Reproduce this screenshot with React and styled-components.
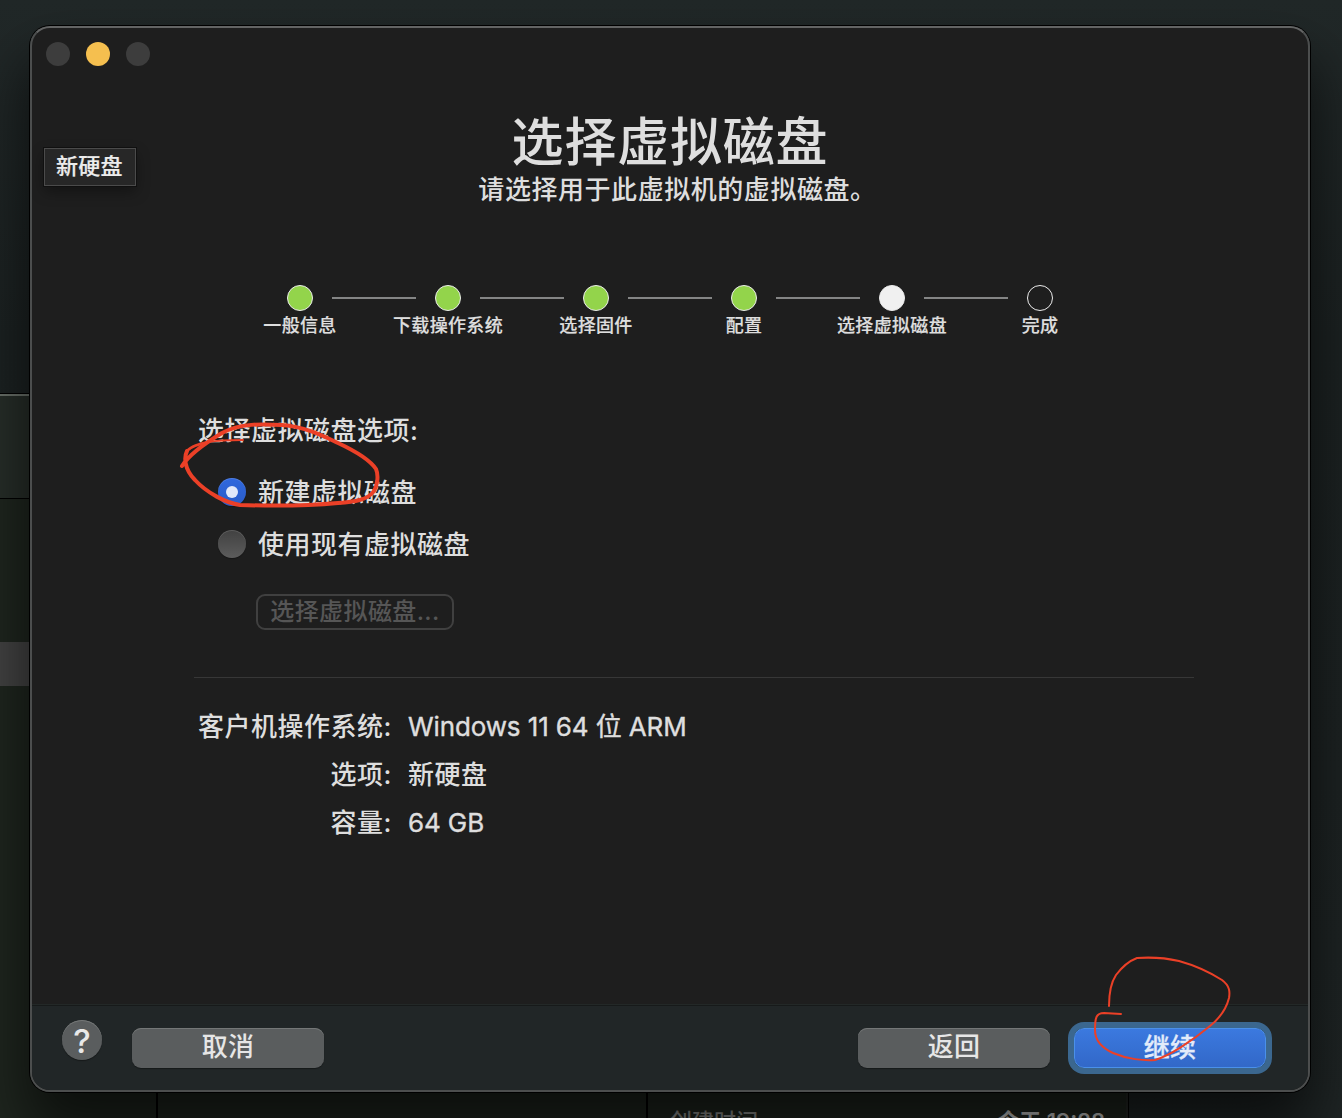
import React from "react";
import styled, { createGlobalStyle, css } from "styled-components";

const GlobalStyle = createGlobalStyle`
  * { box-sizing: border-box; }
  body {
    margin: 0;
    background: #1f2626;
    font-family: Inter, "Noto Sans CJK SC", sans-serif;
    color: #dedede;
    overflow: hidden;
  }
`;

const Desktop = styled.div`
  position: relative;
  width: 1342px;
  height: 1118px;
  overflow: hidden;
  background: linear-gradient(#212828, #1c2222 30%, #1d2323 70%, #1f2525);
`;

const BackWindow = styled.div`
  position: absolute;
  left: 0;
  top: 393px;
  width: 1129px;
  height: 725px;
  display: flex;
  flex-direction: column;
  border-top: 1px solid #000;
  border-right: 1px solid #000;
  background: #1f261f;
`;

const BackToolbar = styled.div`
  height: 105px;
  flex: none;
  background: #272e29;
  border-top: 2px solid #6a716a;
  border-bottom: 1px solid #000;
`;

const BackBody = styled.div`
  flex: 1;
  display: flex;
`;

const BackSidebar = styled.div`
  width: 158px;
  padding-top: 143px;
  border-right: 2px solid #000;
`;

const BackSelection = styled.div`
  height: 44px;
  background: #434343;
`;

const BackList = styled.div`
  width: 490px;
  border-right: 2px solid #000;
`;

const BackDetail = styled.div`
  flex: 1;
  display: flex;
  align-items: flex-end;
  justify-content: space-between;
  padding: 0 21px 0 22px;
  border-right: 2px solid #262926;
`;

const BackText = styled.span`
  height: 8px;
  font-size: 22px;
  line-height: 22px;
  font-weight: ${(p) => (p.$bright ? 600 : 500)};
  color: ${(p) => (p.$bright ? "#c4c6c4" : "#8b8e8b")};
`;

const Dialog = styled.main`
  position: absolute;
  left: 30px;
  top: 26px;
  width: 1280px;
  height: 1066px;
  display: flex;
  flex-direction: column;
  border: 2px solid #4c4e4e;
  border-top-color: #636464;
  border-radius: 20px;
  background: #1e1e1e;
  overflow: hidden;
`;

const DialogShadow = styled.div`
  position: absolute;
  left: 30px;
  top: 26px;
  width: 1280px;
  height: 1066px;
  border-radius: 20px;
  box-shadow: 0 0 0 1px #000, 0 36px 60px 4px rgba(0, 0, 0, 0.62);
`;

const TrafficLights = styled.div`
  display: flex;
  gap: 16px;
  padding: 14px;
`;

const Light = styled.i`
  width: 24px;
  height: 24px;
  border-radius: 50%;
  background: ${(p) => p.$color};
`;

const Header = styled.header`
  display: flex;
  flex-direction: column;
  align-items: center;
  padding-top: 31px;
`;

const Title = styled.h1`
  margin: 0;
  font-size: 52px;
  font-weight: 500;
  line-height: 64px;
  letter-spacing: 0.8px;
`;

const Subtitle = styled.p`
  margin: 0 0 0 15px;
  font-size: 26px;
  font-weight: 500;
  line-height: 30px;
  letter-spacing: 0.55px;
`;

const Steps = styled.ol`
  display: grid;
  grid-template-columns: repeat(6, 148px);
  margin: 80px 0 0 194px;
  padding: 0;
  list-style: none;
`;

const Step = styled.li`
  display: flex;
  flex-direction: column;
  align-items: center;
`;

const Track = styled.div`
  display: flex;
  align-items: center;
  gap: 19px;
`;

const Segment = styled.i`
  width: 42px;
  height: 2px;
  background: ${(p) => (p.$hidden ? "transparent" : "#848585")};
`;

const dotFill = { done: "#93d44b", current: "#f0f0f0", todo: "transparent" };

const Dot = styled.i`
  width: 26px;
  height: 26px;
  border: 1px solid #ececec;
  border-radius: 50%;
  background: ${(p) => dotFill[p.$state]};
`;

const StepLabel = styled.span`
  margin-top: 3px;
  font-size: 18px;
  line-height: 24px;
  font-weight: 500;
  letter-spacing: 0.35px;
  white-space: nowrap;
  -webkit-text-stroke: 0.2px;
`;

const Options = styled.section`
  display: flex;
  flex-direction: column;
  align-items: flex-start;
  padding: 75px 0 0 166px;
  font-size: 26px;
  font-weight: 500;
  letter-spacing: 0.5px;
`;

const OptionsTitle = styled.div`
  line-height: 36px;
`;

const RadioRow = styled.label`
  display: flex;
  align-items: center;
  gap: 12px;
  height: 28px;
  margin: ${(p) => p.$top}px 0 0 20px;
  line-height: 28px;
`;

const RadioText = styled.span`
  padding-top: 2px;
`;

const Radio = styled.i`
  display: flex;
  align-items: center;
  justify-content: center;
  width: 28px;
  height: 28px;
  border-radius: 50%;
  background: linear-gradient(#414141, #5c5c5c);
  box-shadow: inset 0 1px 0 rgba(255, 255, 255, 0.14), 0 1px 1px rgba(0, 0, 0, 0.3);
  ${(p) =>
    p.$on &&
    css`
      background: linear-gradient(#3068de, #2a5cc8);
      &::after {
        content: "";
        width: 12px;
        height: 12px;
        border-radius: 50%;
        background: #e2e9fa;
      }
    `}
`;

const PickButton = styled.button`
  width: 198px;
  height: 36px;
  margin: 36px 0 0 58px;
  padding: 0;
  border: 2px solid #404040;
  border-radius: 9px;
  background: transparent;
  color: #565656;
  font: 500 24px/32px Inter, "Noto Sans CJK SC", sans-serif;
  letter-spacing: 0.4px;
  white-space: nowrap;
`;

const Divider = styled.hr`
  width: 1000px;
  height: 1px;
  margin: 47px 0 0 162px;
  border: 0;
  background: #373737;
`;

const Summary = styled.dl`
  display: grid;
  grid-template-columns: 194px 1fr;
  column-gap: 16px;
  grid-auto-rows: 48px;
  margin: 25px 0 0 166px;
  font-size: 26px;
  line-height: 48px;
`;

const Term = styled.dt`
  text-align: right;
  font-weight: 500;
  white-space: nowrap;
  letter-spacing: 0.5px;
`;

const Value = styled.dd`
  margin: 0;
  font-weight: ${(p) => (p.$cjk ? 500 : 400)};
  letter-spacing: ${(p) => (p.$cjk ? 0.5 : -0.12)}px;
  -webkit-text-stroke: ${(p) => (p.$cjk ? 0 : 0.4)}px;
`;

const Footer = styled.footer`
  display: flex;
  align-items: flex-start;
  height: 86px;
  margin-top: auto;
  padding: 16px 42px 0 30px;
  background: #212627;
  border-top: 1px solid #232827;
  box-shadow: inset 0 1px 0 #171a1a;
`;

const HelpButton = styled.button`
  width: 40px;
  height: 40px;
  margin: -1px 0 0;
  padding: 0;
  border: 0;
  border-radius: 50%;
  background: #5a5d5e;
  box-shadow: inset 0 1px 0 #747777, 0 1px 1px rgba(0, 0, 0, 0.35);
  color: #e8e8e8;
  font: 500 33px/42px Inter, sans-serif;
`;

const PushButton = styled.button`
  width: 192px;
  height: 40px;
  margin: 7px 0 0 ${(p) => p.$left};
  padding: 0 0 2px;
  border: 0;
  border-radius: 9px;
  background: #5a5d5e;
  box-shadow: inset 0 1px 0 #747777, 0 1px 1px rgba(0, 0, 0, 0.35);
  color: #e6e6e6;
  font: 500 26px/38px Inter, "Noto Sans CJK SC", sans-serif;
  letter-spacing: 0.3px;
  ${(p) =>
    p.$primary &&
    css`
      padding-bottom: 0;
      border: 1px solid #4a90ea;
      border-radius: 10px;
      background: linear-gradient(#3b79df, #3268c8);
      box-shadow: 0 0 0 6px #3b678f;
      color: #e2ebfa;
      -webkit-text-stroke: 0.3px;
    `}
`;

const Tooltip = styled.div`
  position: absolute;
  left: 44px;
  top: 148px;
  width: 92px;
  height: 38px;
  padding-left: 11px;
  border: 1px solid #4b4b4b;
  background: #272727;
  box-shadow: 0 0 0 1px #101010, 0 6px 14px rgba(0, 0, 0, 0.35);
  font-size: 22px;
  font-weight: 500;
  line-height: 35px;
  letter-spacing: 0.2px;
  color: #ececec;
  -webkit-text-stroke: 0.2px;
`;

const Markup = styled.svg`
  position: absolute;
  left: 0;
  top: 0;
  pointer-events: none;
`;

const steps = [
  ["一般信息", "done"],
  ["下载操作系统", "done"],
  ["选择固件", "done"],
  ["配置", "done"],
  ["选择虚拟磁盘", "current"],
  ["完成", "todo"],
];

export default function App() {
  return (
    <Desktop>
      <GlobalStyle />
      <BackWindow>
        <BackToolbar />
        <BackBody>
          <BackSidebar>
            <BackSelection />
          </BackSidebar>
          <BackList />
          <BackDetail>
            <BackText>创建时间</BackText>
            <BackText $bright>今天 19:28</BackText>
          </BackDetail>
        </BackBody>
      </BackWindow>
      <DialogShadow />
      <Dialog>
        <TrafficLights>
          <Light $color="#3d3d3d" />
          <Light $color="#f5bf4f" />
          <Light $color="#3d3d3d" />
        </TrafficLights>
        <Header>
          <Title>选择虚拟磁盘</Title>
          <Subtitle>请选择用于此虚拟机的虚拟磁盘。</Subtitle>
        </Header>
        <Steps>
          {steps.map(([label, state], i) => (
            <Step key={label}>
              <Track>
                <Segment $hidden={i === 0} />
                <Dot $state={state} />
                <Segment $hidden={i === steps.length - 1} />
              </Track>
              <StepLabel>{label}</StepLabel>
            </Step>
          ))}
        </Steps>
        <Options>
          <OptionsTitle>选择虚拟磁盘选项:</OptionsTitle>
          <RadioRow $top={29}>
            <Radio $on />
            <RadioText>新建虚拟磁盘</RadioText>
          </RadioRow>
          <RadioRow $top={24}>
            <Radio />
            <RadioText>使用现有虚拟磁盘</RadioText>
          </RadioRow>
          <PickButton disabled>选择虚拟磁盘...</PickButton>
        </Options>
        <Divider />
        <Summary>
          <Term>客户机操作系统:</Term>
          <Value>Windows 11 64 位 ARM</Value>
          <Term>选项:</Term>
          <Value $cjk>新硬盘</Value>
          <Term>容量:</Term>
          <Value>64 GB</Value>
        </Summary>
        <Footer>
          <HelpButton>?</HelpButton>
          <PushButton $left="30px">取消</PushButton>
          <PushButton $left="auto">返回</PushButton>
          <PushButton $left="24px" $primary>
            继续
          </PushButton>
        </Footer>
      </Dialog>
      <Tooltip>新硬盘</Tooltip>
      <Markup width="1342" height="1118" fill="none" stroke="#eb4027" strokeLinecap="round" strokeLinejoin="round">
        <path
          strokeWidth="4"
          d="M182 466C190 453 207 442 222 433C240 423 262 424 282 425C306 427 323 436 338 443C353 450 370 460 376 469C379 476 377 486 374 491C368 500 354 502 338 503C306 506 272 506 240 505C226 503 207 493 195 480C184 469 184 457 187 451"
        />
        <path strokeWidth="2.5" d="M187 451C191 446 199 444 208 442" />
        <path strokeWidth="1.8" d="M208 442C220 440 232 440 243 440" />
        <path
          strokeWidth="2"
          d="M1109 1006C1109 994 1110 984 1116 975C1122 967 1129 961 1137 958C1152 957 1166 958 1179 961C1197 966 1211 973 1222 980C1230 986 1230 992 1229 998C1226 1010 1220 1018 1210 1026C1192 1041 1169 1056 1155 1060C1144 1061 1127 1059 1113 1053C1100 1047 1095 1039 1095 1030C1095 1018 1096 1013 1104 1013L1121 1014"
        />
      </Markup>
    </Desktop>
  );
}
